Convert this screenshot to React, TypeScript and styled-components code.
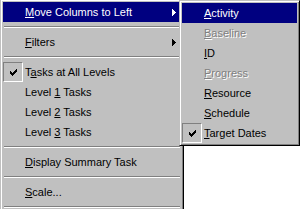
import React from "react";
import styled, { createGlobalStyle } from "styled-components";

const Global = createGlobalStyle`
  html, body { margin: 0; padding: 0; background: #ffffff; }
  body {
    font-family: "Liberation Sans", Arial, sans-serif;
    font-size: 11px;
    -webkit-font-smoothing: none;
  }
`;

const Desktop = styled.div`
  position: relative;
  width: 300px;
  height: 209px;
  overflow: hidden;
  background: #ffffff;
`;

const Menu = styled.div<{ $width: number }>`
  box-sizing: border-box;
  width: ${(p) => p.$width}px;
  background: #c0c0c0;
  border: 1px solid;
  border-color: #c0c0c0 #000000 #000000 #c0c0c0;
  box-shadow: inset 1px 1px #ffffff, inset -1px -1px #808080;
  padding: 2px;
  display: flex;
  flex-direction: column;
`;

const MainMenu = styled(Menu)`
  margin-top: -1px;
  padding-bottom: 20px;
`;

const SubMenu = styled(Menu)`
  position: absolute;
  left: 179px;
  top: 0;
`;

const Item = styled.div<{ $active?: boolean; $disabled?: boolean }>`
  display: flex;
  align-items: center;
  height: 20px;
  padding-right: 5px;
  background: ${(p) => (p.$active ? "#000080" : "transparent")};
  color: ${(p) => (p.$active ? "#ffffff" : p.$disabled ? "#808080" : "#000000")};
  text-shadow: ${(p) => (p.$disabled ? "1px 1px 0 #ffffff" : "none")};
  white-space: nowrap;
  line-height: 20px;
`;

const CheckSlot = styled.div`
  flex: 0 0 22px;
  height: 20px;
  display: flex;
  align-items: center;
`;

const CheckBox = styled.div`
  box-sizing: border-box;
  width: 20px;
  height: 20px;
  border: 1px solid;
  border-color: #808080 #ffffff #ffffff #808080;
  display: flex;
  align-items: center;
  justify-content: center;
`;

const Label = styled.span`
  flex: 1;
`;

const U = styled.span`
  text-decoration: underline;
  text-underline-offset: 1px;
`;

const Separator = styled.div`
  height: 0;
  margin: 4px 1px;
  border-top: 1px solid #808080;
  border-bottom: 1px solid #ffffff;
`;

const Check = () => (
  <svg width="7" height="7" viewBox="0 0 7 7" shapeRendering="crispEdges">
    <path
      d="M6 0h1v1H6zM5 1h2v1H5zM0 2h1v1H0zM4 2h3v1H4zM0 3h2v1H0zM3 3h3v1H3zM0 4h5v1H0zM1 5h3v1H1zM2 6h1v1H2z"
      fill="#000"
    />
  </svg>
);

const Arrow = ({ color }: { color: string }) => (
  <svg width="4" height="7" viewBox="0 0 4 7" shapeRendering="crispEdges">
    <path d="M0 0h1v7H0zM1 1h1v5H1zM2 2h1v3H2zM3 3h1v1H3z" fill={color} />
  </svg>
);

type Entry = {
  pre?: string;
  key: string;
  post?: string;
  active?: boolean;
  disabled?: boolean;
  checked?: boolean;
  sub?: boolean;
};

const MenuItem = ({ e }: { e: Entry }) => (
  <Item $active={e.active} $disabled={e.disabled}>
    <CheckSlot>
      {e.checked && (
        <CheckBox>
          <Check />
        </CheckBox>
      )}
    </CheckSlot>
    <Label>
      {e.pre}
      <U>{e.key}</U>
      {e.post}
    </Label>
    {e.sub && <Arrow color={e.active ? "#ffffff" : "#000000"} />}
  </Item>
);

const subItems: Entry[] = [
  { key: "A", post: "ctivity", active: true },
  { key: "B", post: "aseline", disabled: true },
  { key: "I", post: "D" },
  { key: "P", post: "rogress", disabled: true },
  { key: "R", post: "esource" },
  { key: "S", post: "chedule" },
  { key: "T", post: "arget Dates", checked: true },
];

export default function App() {
  return (
    <>
      <Global />
      <Desktop>
        <MainMenu $width={184}>
          <MenuItem e={{ key: "M", post: "ove Columns to Left", active: true, sub: true }} />
          <Separator />
          <MenuItem e={{ key: "F", post: "ilters", sub: true }} />
          <Separator />
          <MenuItem e={{ pre: "T", key: "a", post: "sks at All Levels", checked: true }} />
          <MenuItem e={{ pre: "Level ", key: "1", post: " Tasks" }} />
          <MenuItem e={{ pre: "Level ", key: "2", post: " Tasks" }} />
          <MenuItem e={{ pre: "Level ", key: "3", post: " Tasks" }} />
          <Separator />
          <MenuItem e={{ key: "D", post: "isplay Summary Task" }} />
          <Separator />
          <MenuItem e={{ key: "S", post: "cale..." }} />
          <Separator />
        </MainMenu>
        <SubMenu $width={121}>
          {subItems.map((e, i) => (
            <MenuItem key={i} e={e} />
          ))}
        </SubMenu>
      </Desktop>
    </>
  );
}
